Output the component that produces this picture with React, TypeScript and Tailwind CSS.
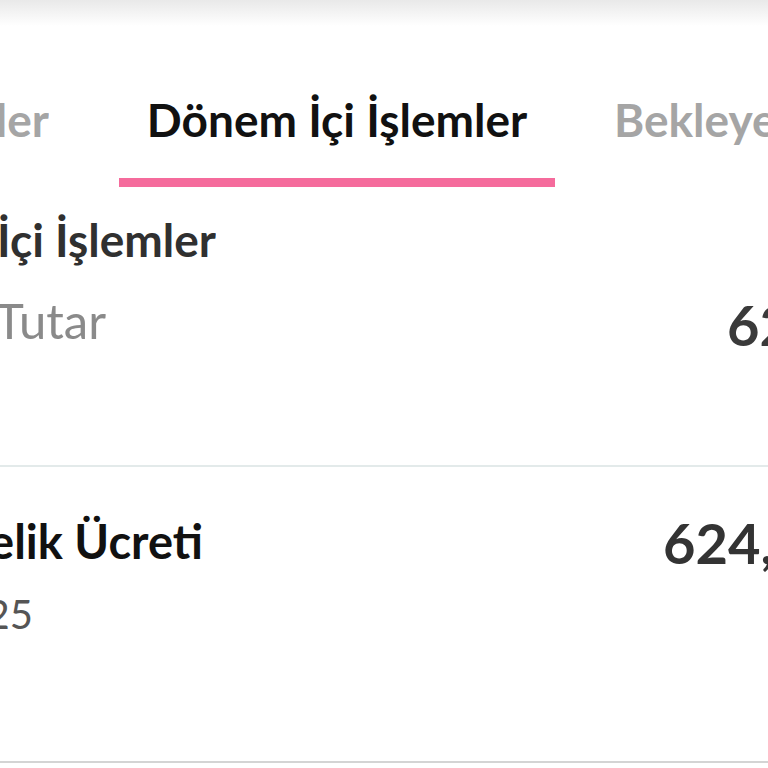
import React from "react";

// clipped text: keeps the right end visible, cuts the start
const ClipLeft: React.FC<{ width: string; className?: string; children: React.ReactNode }> = ({
  width,
  className = "",
  children,
}) => (
  <div className={`flex justify-end overflow-hidden shrink-0 whitespace-nowrap ${width} ${className}`}>
    <span>{children}</span>
  </div>
);

const App: React.FC = () => {
  return (
    <div
      className="w-[768px] h-[768px] overflow-hidden bg-white"
      style={{ fontFamily: "Lato, 'Noto Sans', sans-serif" }}
    >
      {/* header shadow */}
      <div className="h-[26px] bg-gradient-to-b from-[#e9e9e9] to-white" />

      {/* tabs */}
      <div className="flex items-end whitespace-nowrap pt-[68px]">
        <ClipLeft width="w-[49px]" className="text-[46px] leading-[52px] font-bold text-[#a5a5a5] pb-[41px]">
          Dönem Dışı İşlemler
        </ClipLeft>
        <div className="ml-[70px] w-[436px] shrink-0 flex flex-col items-center">
          <span className="text-[46px] leading-[52px] font-bold text-[#111]">Dönem İçi İşlemler</span>
          <div className="mt-[32px] h-[9px] w-full bg-[#f56b9c]" />
        </div>
        <span className="ml-[59px] text-[46px] leading-[52px] font-bold text-[#a5a5a5] pb-[41px]">
          Bekleyen İşlemler
        </span>
      </div>

      {/* period summary */}
      <div className="pt-[26px] h-[280px] border-b-2 border-[#e3eaea]">
        <ClipLeft width="w-[216px]" className="text-[46px] leading-[54px] font-bold text-[#303030]">
          Dönem İçi İşlemler
        </ClipLeft>
        <div className="flex items-start mt-[26px] whitespace-nowrap">
          <ClipLeft width="w-[106px]" className="text-[49px] leading-[54px] text-[#8a8a8a]">
            Toplam Tutar
          </ClipLeft>
          <span className="ml-[621px] mt-[2px] text-[56px] leading-[60px] font-bold text-[#3a3a3a]">
            624,50 TL
          </span>
        </div>
      </div>

      {/* transaction row */}
      <div className="pt-[46px] h-[296px] border-b-2 border-[#d4d4d4]">
        <div className="flex items-start whitespace-nowrap">
          <ClipLeft width="w-[203px]" className="text-[47px] leading-[56px] font-bold text-[#111]">
            Kart Üyelik Ücreti
          </ClipLeft>
          <span className="ml-[460px] text-[56px] leading-[60px] font-bold text-[#333]">624,50 TL</span>
        </div>
        <ClipLeft width="w-[33px]" className="mt-[17px] text-[40px] leading-[48px] text-[#555]">
          15.01.2025
        </ClipLeft>
      </div>
    </div>
  );
};

export default App;
